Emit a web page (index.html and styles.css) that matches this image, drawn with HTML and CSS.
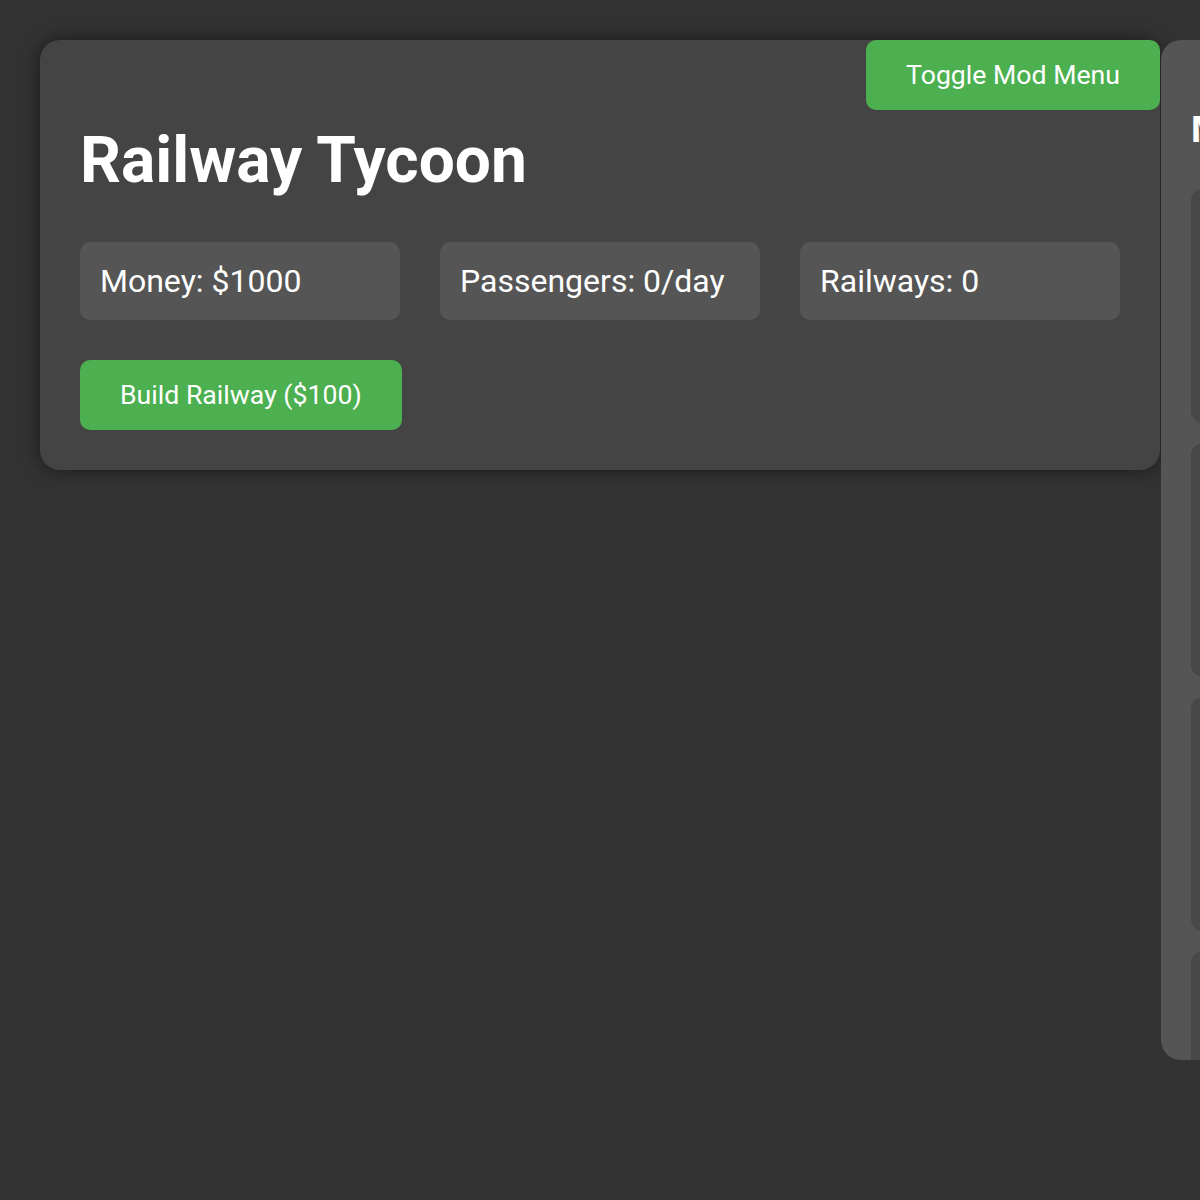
FILE: index.html
```html
<!DOCTYPE html>
<html lang="en">
<head>
<meta charset="utf-8">
<title>Railway Tycoon</title>
<link rel="stylesheet" href="styles.css">
</head>
<body>
  <main class="game">
    <h1 class="title">Railway Tycoon</h1>
    <div class="stats">
      <div class="stat">Money: $1000</div>
      <div class="stat">Passengers: 0/day</div>
      <div class="stat">Railways: 0</div>
    </div>
    <button class="btn">Build Railway ($100)</button>
  </main>

  <button class="btn toggle">Toggle Mod Menu</button>

  <aside class="mod-menu">
    <h3 class="mod-title">Mod Menu</h3>
    <section class="mod-card"></section>
    <section class="mod-card"></section>
    <section class="mod-card"></section>
    <section class="mod-card"></section>
  </aside>
</body>
</html>
```

FILE: styles.css
```css
html, body {
  overflow: hidden;
}

body {
  margin: 0;
  padding: 40px;
  background: #333333;
  color: #ffffff;
  font-family: Roboto, "Liberation Sans", sans-serif;
  min-height: 1200px;
  box-sizing: border-box;
}

.game {
  background: #444444;
  border-radius: 20px;
  padding: 40px;
  box-shadow: 0 0 20px rgba(0, 0, 0, 0.5);
}

.title {
  font-size: 64px;
  font-weight: 700;
  margin: 43px 0 44px;
  line-height: normal;
}

.stats {
  display: grid;
  grid-template-columns: repeat(3, 1fr);
  gap: 40px;
  margin-bottom: 40px;
}

.stat {
  background: #555555;
  border-radius: 10px;
  padding: 20px;
  font-size: 32px;
  line-height: normal;
}

.btn {
  display: block;
  background: #4caf50;
  color: #ffffff;
  border: none;
  border-radius: 10px;
  padding: 20px 40px;
  font-family: Roboto, "Liberation Sans", sans-serif;
  font-size: 26.67px;
  line-height: 30px;
  cursor: pointer;
}

.toggle {
  position: absolute;
  top: 40px;
  right: 40px;
  z-index: 2;
}

.mod-menu {
  position: absolute;
  top: 40px;
  left: 1161px;
  width: 300px;
  height: 1020px;
  box-sizing: border-box;
  padding: 30px;
  background: #555555;
  border-radius: 20px;
  overflow: hidden;
}

.mod-title {
  font-size: 37.44px;
  font-weight: 700;
  margin: 37.44px 0;
  line-height: normal;
}

.mod-card {
  height: 234px;
  margin-bottom: 20px;
  background: #484848;
  border-radius: 12px;
}
```
